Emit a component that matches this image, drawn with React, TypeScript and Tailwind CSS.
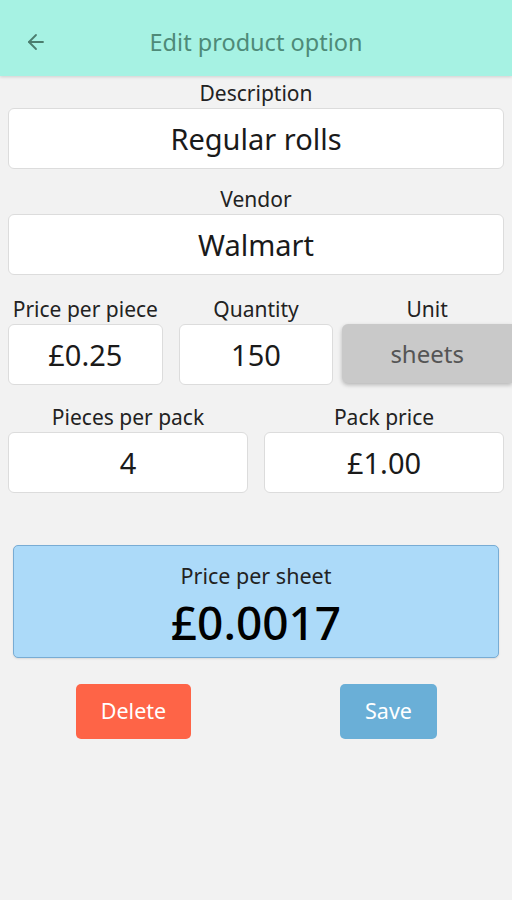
import { ArrowLeft } from 'lucide-react';

const font = { fontFamily: '"Noto Sans", "Open Sans", sans-serif' };

function Field({ label, value, className = '' }: { label: string; value: string; className?: string }) {
  return (
    <div className={`flex flex-col items-center ${className}`}>
      <div className="text-[21px] leading-[30px] text-[#222] whitespace-nowrap">{label}</div>
      <div className="w-full h-[61px] bg-white rounded-[6px] border border-[#dcdcdc] flex items-center justify-center text-[29px] text-[#1a1a1a]">
        {value}
      </div>
    </div>
  );
}

export default function App() {
  return (
    <div className="w-[512px] h-[900px] bg-[#f2f2f2] overflow-hidden" style={font}>
      {/* Toolbar */}
      <div className="h-[76px] bg-[#a6f2e3] relative shadow-[0_1px_3px_rgba(0,0,0,0.15)]">
        <ArrowLeft className="absolute left-[24px] top-[30px] w-[24px] h-[24px] text-[#4b7d6e]" strokeWidth={1.8} />
        <div className="w-full text-center text-[23.5px] leading-[32px] text-[#4e8a78] pt-[26px]">Edit product option</div>
      </div>

      <div className="px-2 pt-[2px]">
        <Field label="Description" value="Regular rolls" />
        <Field label="Vendor" value="Walmart" className="mt-[15px]" />
      </div>

      <div className="grid grid-cols-3 mt-[19px]">
        <div className="px-2">
          <Field label="Price per piece" value="£0.25" />
        </div>
        <div className="px-2">
          <Field label="Quantity" value="150" />
        </div>
        <div className="pl-px flex flex-col items-center">
          <div className="text-[21px] leading-[30px] text-[#222]">Unit</div>
          <div className="w-full h-[59px] bg-[#c9c9c9] rounded-l-[6px] shadow-[0_2px_4px_rgba(0,0,0,0.25)] flex items-center justify-center text-[24px] text-[#555]">
            sheets
          </div>
        </div>
      </div>

      <div className="grid grid-cols-2 mt-[17px]">
        <div className="px-2">
          <Field label="Pieces per pack" value="4" />
        </div>
        <div className="px-2">
          <Field label="Pack price" value="£1.00" />
        </div>
      </div>

      <div className="mx-[13px] mt-[52px] h-[113px] bg-[#acdaf9] border border-[#78acd4] rounded-[5px] flex flex-col items-center pt-[16px] shadow-[0_1px_2px_rgba(0,0,0,0.1)]">
        <div className="text-[21.5px] text-[#222] leading-[28px]">Price per sheet</div>
        <div className="text-[46px] font-medium text-black leading-[50px] mt-[7px]">£0.0017</div>
      </div>

      <div className="flex mt-[26px]">
        <div className="flex-1 flex justify-center pl-[10px]">
          <button className="w-[115px] h-[55px] bg-[#fe6447] text-white text-[21.5px] rounded-[5px]">Delete</button>
        </div>
        <div className="flex-1 flex justify-center pl-[8px]">
          <button className="w-[97px] h-[55px] bg-[#6aafd7] text-white text-[21.5px] rounded-[5px]">Save</button>
        </div>
      </div>
    </div>
  );
}
